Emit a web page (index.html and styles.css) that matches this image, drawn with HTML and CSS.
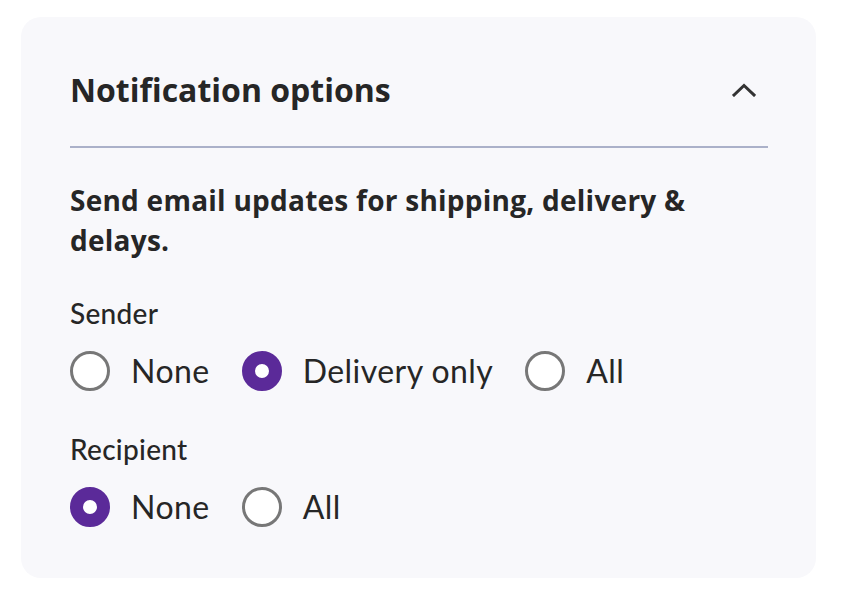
FILE: index.html
```html
<!DOCTYPE html>
<html lang="en">
<head>
<meta charset="utf-8">
<title>Notification options</title>
<link rel="stylesheet" href="styles.css">
</head>
<body>
<section class="card">
  <header class="card-header">
    <h2 class="title">Notification options</h2>
    <button class="toggle" aria-label="Collapse">
      <svg width="24" height="14" viewBox="0 0 24 14"><path d="M2 12 L12 2.5 L22 12" fill="none" stroke="#333" stroke-width="3" stroke-linecap="square"/></svg>
    </button>
  </header>
  <div class="divider"></div>
  <p class="desc">Send email updates for shipping, delivery &amp; delays.</p>
  <div class="group sender">
    <div class="group-label">Sender</div>
    <div class="options">
      <label class="option"><span class="radio"></span><span class="opt-text">None</span></label>
      <label class="option"><span class="radio checked"></span><span class="opt-text">Delivery only</span></label>
      <label class="option"><span class="radio"></span><span class="opt-text">All</span></label>
    </div>
  </div>
  <div class="group recipient">
    <div class="group-label">Recipient</div>
    <div class="options">
      <label class="option"><span class="radio checked"></span><span class="opt-text">None</span></label>
      <label class="option"><span class="radio"></span><span class="opt-text">All</span></label>
    </div>
  </div>
</section>
</body>
</html>
```
FILE: styles.css
```css
* { box-sizing: border-box; }
body {
  margin: 0;
  padding: 17px 0 0 21px;
  background: #ffffff;
  font-family: Lato, "Noto Sans", sans-serif;
  color: #262626;
}
.card {
  width: 795px;
  background: #f8f8fb;
  border-radius: 20px;
  padding: 53px 48px 51px 49px;
}
.card-header {
  display: flex;
  align-items: center;
  justify-content: space-between;
  height: 40px;
}
.title {
  margin: 0;
  font-family: "Open Sans", Lato, sans-serif;
  font-size: 32px;
  font-weight: 700;
  line-height: 40px;
  color: #262626;
}
.toggle {
  border: 0;
  background: none;
  padding: 0;
  margin-right: 12px;
  width: 24px;
  height: 14px;
  display: flex;
}
.divider {
  margin-top: 36px;
  height: 2px;
  background: #abb1c9;
}
.desc {
  margin: 32px 0 0;
  font-family: "Open Sans", Lato, sans-serif;
  font-size: 28px;
  font-weight: 700;
  letter-spacing: 0.25px;
  line-height: 40px;
  max-width: 650px;
}
.group-label {
  font-size: 28px;
  font-weight: 500;
  letter-spacing: 0.3px;
  line-height: 32px;
}
.sender { margin-top: 37px; }
.recipient { margin-top: 42px; }
.options {
  margin-top: 22px;
  display: flex;
  gap: 32px;
}
.option {
  display: flex;
  align-items: center;
  gap: 21px;
  height: 40px;
  font-size: 32px;
  letter-spacing: 0.45px;
  line-height: 40px;
}
.radio {
  width: 40px;
  height: 40px;
  border-radius: 50%;
  border: 3px solid #777777;
  background: #ffffff;
  flex: none;
}
.radio.checked {
  border: 13px solid #5b2a99;
  background: #ffffff;
}
```
